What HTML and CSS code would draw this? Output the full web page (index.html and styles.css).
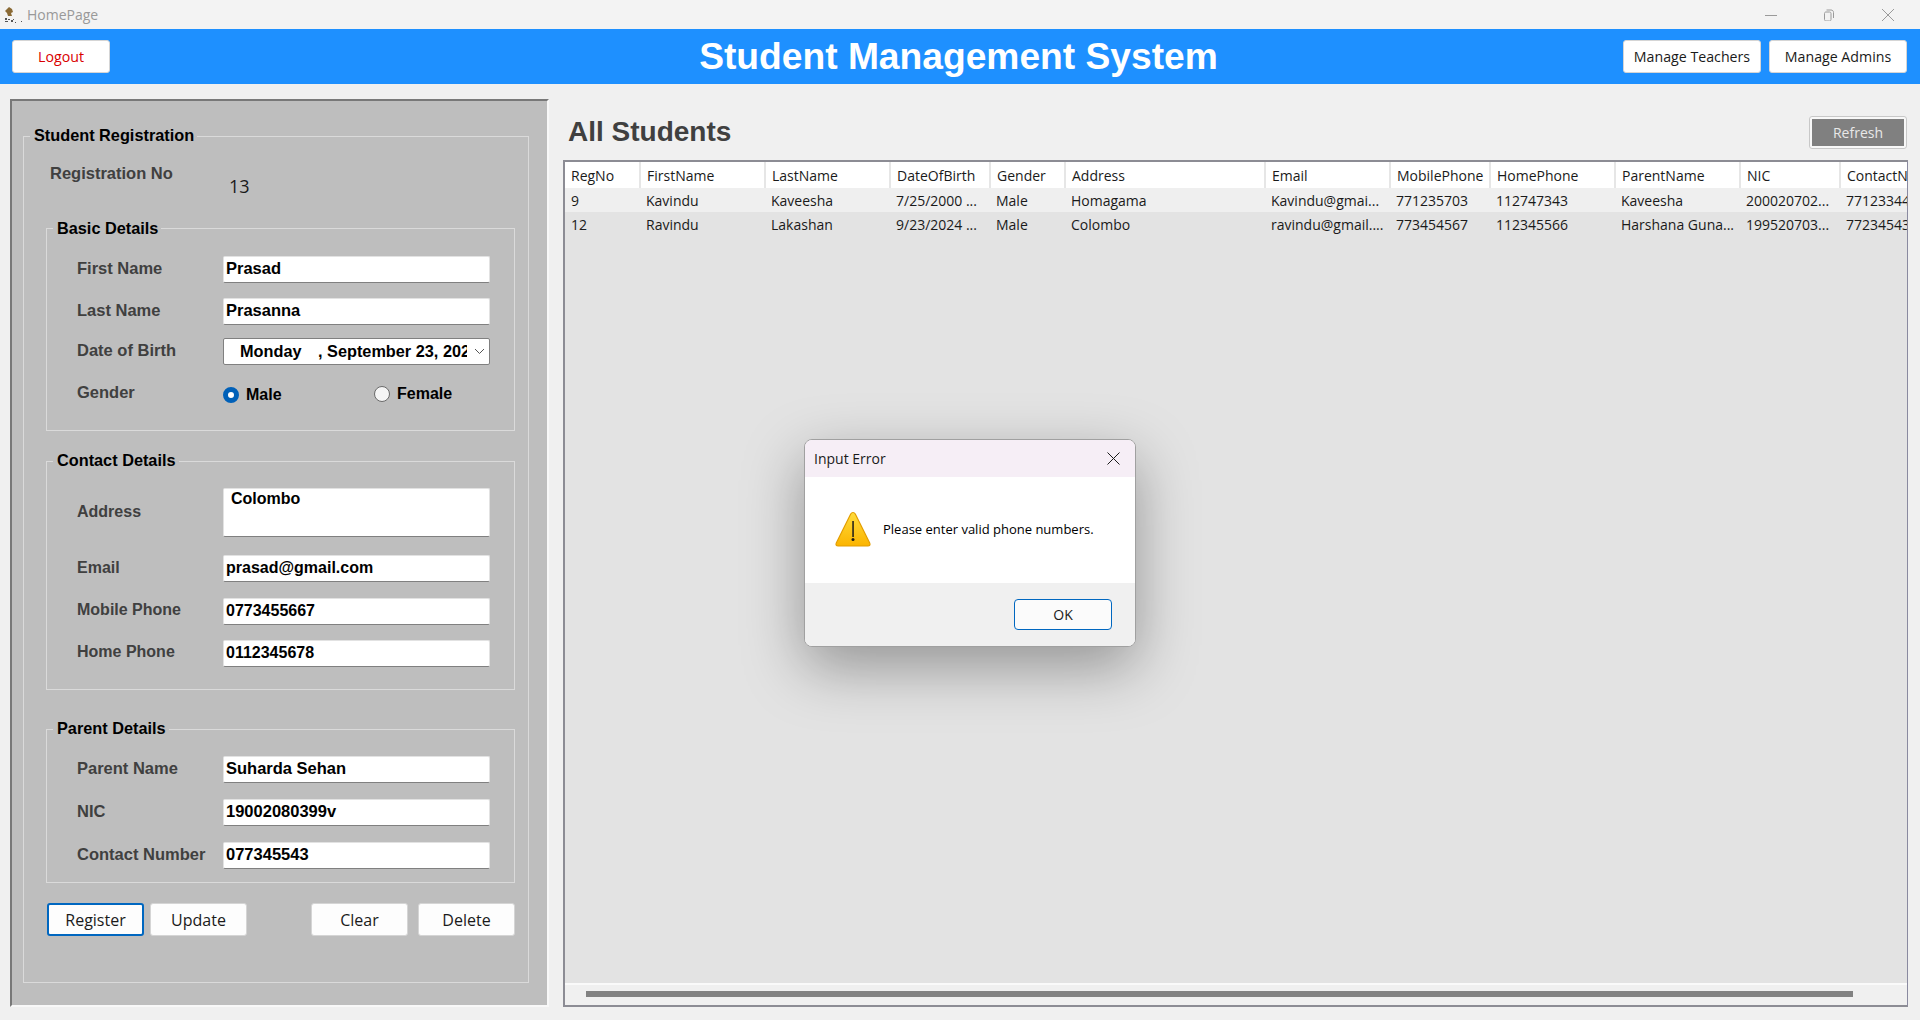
FILE: index.html
```html
<!DOCTYPE html>
<html lang="en">
<head>
    <meta charset="UTF-8">
    <meta name="viewport" content="width=device-width, initial-scale=1.0">
    <title>HomePage</title>
    <link rel="stylesheet" href="styles.css">
</head>
<body>
<div class="titlebar">
    <svg class="app-icon" width="20" height="20" viewBox="0 0 20 20">
        <path d="M7 2l3 2 1 3-2 1 1 3H6L5 8 3 6z" fill="#8a6a35"/>
        <path d="M3 13h2v2H3zM6 14h2v1H6zM3 16h3v1H3zM9 15h2v2H9zM11 14h1v1h-1zM19 16h1v1h-1zM13 17h1v1h-1z" fill="#555"/>
    </svg>
    <span class="app-name">HomePage</span>
    <div class="window-controls">
        <svg width="12" height="12" viewBox="0 0 12 12"><path d="M0 6.5h12" stroke="#9a9a9a" fill="none"/></svg>
        <svg width="12" height="12" viewBox="0 0 12 12"><path d="M1.500 4.500C1.500 3.600 2.100 3 3 3h3.500C7.400 3 8 3.600 8 4.500v6c0 .9-.6 1.500-1.500 1.500H3c-.9 0-1.500-.6-1.500-1.500zM3.500 1H8c1.500 0 2.500 1 2.500 2.500V9" stroke="#9a9a9a" fill="none"/></svg>
        <svg width="14" height="14" viewBox="0 0 14 14"><path d="M1 1l12 12M13 1L1 13" stroke="#9a9a9a" fill="none"/></svg>
    </div>
</div>

<header class="topbar">
    <div class="topbar-left"><button class="top-btn logout">Logout</button></div>
    <h1 class="app-title">Student Management System</h1>
    <div class="topbar-right">
        <button class="top-btn">Manage Teachers</button>
        <button class="top-btn">Manage Admins</button>
    </div>
</header>

<main class="content">
    <section class="form-panel">
        <fieldset class="group outer">
            <legend>Student Registration</legend>
            <div class="reg-row">
                <span class="field-label">Registration No</span>
                <span class="reg-value">13</span>
            </div>

            <fieldset class="group basic">
                <legend>Basic Details</legend>
                <div class="row">
                    <label class="field-label" for="first">First Name</label>
                    <input class="field" id="first" type="text" value="Prasad">
                </div>
                <div class="row tight">
                    <label class="field-label" for="last">Last Name</label>
                    <input class="field" id="last" type="text" value="Prasanna">
                </div>
                <div class="row">
                    <span class="field-label">Date of Birth</span>
                    <div class="date-box">
                        <span class="date-day">Monday</span>
                        <span class="date-rest">, September 23, 2024</span>
                        <svg class="chevron" width="11" height="7" viewBox="0 0 11 7"><path d="M1 1l4.500 4.500L10 1" stroke="#555" fill="none"/></svg>
                    </div>
                </div>
                <div class="row radios">
                    <span class="field-label">Gender</span>
                    <span class="radio-item male"><span class="radio on"></span>Male</span>
                    <span class="radio-item"><span class="radio"></span>Female</span>
                </div>
            </fieldset>

            <fieldset class="group contact">
                <legend>Contact Details</legend>
                <div class="row address-row">
                    <label class="field-label" for="address">Address</label>
                    <textarea class="field address" id="address">Colombo</textarea>
                </div>
                <div class="row wide">
                    <label class="field-label" for="email">Email</label>
                    <input class="field" id="email" type="text" value="prasad@gmail.com">
                </div>
                <div class="row">
                    <label class="field-label" for="mobile">Mobile Phone</label>
                    <input class="field" id="mobile" type="text" value="0773455667">
                </div>
                <div class="row last">
                    <label class="field-label" for="home">Home Phone</label>
                    <input class="field" id="home" type="text" value="0112345678">
                </div>
            </fieldset>

            <fieldset class="group parent">
                <legend>Parent Details</legend>
                <div class="row wide">
                    <label class="field-label" for="parent">Parent Name</label>
                    <input class="field" id="parent" type="text" value="Suharda Sehan">
                </div>
                <div class="row wide">
                    <label class="field-label" for="nic">NIC</label>
                    <input class="field" id="nic" type="text" value="19002080399v">
                </div>
                <div class="row last">
                    <label class="field-label" for="contact">Contact Number</label>
                    <input class="field" id="contact" type="text" value="077345543">
                </div>
            </fieldset>

            <div class="actions">
                <button class="action-btn focused">Register</button>
                <button class="action-btn">Update</button>
                <button class="action-btn push">Clear</button>
                <button class="action-btn">Delete</button>
            </div>
        </fieldset>
    </section>

    <section class="list-panel">
        <div class="list-head">
            <h2>All Students</h2>
            <button class="refresh"><span>Refresh</span></button>
        </div>
        <div class="grid-box">
            <div class="grid-scroll">
                <table class="grid">
                    <colgroup>
                        <col class="w75"><col class="w125"><col class="w125"><col class="w100"><col class="w75"><col class="w200">
                        <col class="w125"><col class="w100"><col class="w125"><col class="w125"><col class="w100"><col class="w125">
                    </colgroup>
                    <thead>
                        <tr>
                            <th>RegNo</th><th>FirstName</th><th>LastName</th><th>DateOfBirth</th><th>Gender</th><th>Address</th>
                            <th>Email</th><th>MobilePhone</th><th>HomePhone</th><th>ParentName</th><th>NIC</th><th>ContactNumber</th>
                        </tr>
                    </thead>
                    <tbody>
                        <tr class="alt">
                            <td>9</td><td>Kavindu</td><td>Kaveesha</td><td>7/25/2000 ...</td><td>Male</td><td>Homagama</td>
                            <td>Kavindu@gmai...</td><td>771235703</td><td>112747343</td><td>Kaveesha</td><td>200020702...</td><td>771233445</td>
                        </tr>
                        <tr>
                            <td>12</td><td>Ravindu</td><td>Lakashan</td><td>9/23/2024 ...</td><td>Male</td><td>Colombo</td>
                            <td>ravindu@gmail....</td><td>773454567</td><td>112345566</td><td>Harshana Guna...</td><td>199520703...</td><td>772345432</td>
                        </tr>
                    </tbody>
                </table>
            </div>
            <div class="hscroll"><div class="hscroll-thumb"></div></div>
        </div>
    </section>
</main>

<!-- message box sits over the page -->
<div class="dialog">
    <div class="dialog-title">
        <span>Input Error</span>
        <svg width="13" height="13" viewBox="0 0 13 13"><path d="M.5.5l12 12M12.500.5l-12 12" stroke="#1a1a1a" fill="none"/></svg>
    </div>
    <div class="dialog-body">
        <svg class="warn" width="36" height="36" viewBox="0 0 36 36">
            <defs>
                <linearGradient id="warnFill" x1="0" y1="0" x2="0" y2="1">
                    <stop offset="0" stop-color="#ffdc3c"/>
                    <stop offset="1" stop-color="#fbb400"/>
                </linearGradient>
            </defs>
            <path d="M18 1.500c1 0 1.700.5 2.300 1.500l14.400 29c.8 1.700 0 3-1.800 3H3.100c-1.800 0-2.600-1.300-1.800-3L15.700 3c.6-1 1.300-1.500 2.300-1.500z" fill="url(#warnFill)" stroke="#e39d00" stroke-width="1.200"/>
            <rect x="17.300" y="10" width="1.500" height="16" fill="#1a1a1a"/>
            <circle cx="18" cy="28.500" r="1.500" fill="#1a1a1a"/>
        </svg>
        <span class="dialog-msg">Please enter valid phone numbers.</span>
    </div>
    <div class="dialog-foot">
        <button class="dialog-ok">OK</button>
    </div>
</div>
</body>
</html>
```

FILE: styles.css
```css
* {
    box-sizing: border-box;
}
body {
    margin: 0;
    height: 1020px;
    overflow: hidden;
    background-color: #f0f0f0;
    font-family: "Open Sans", "Noto Sans", sans-serif;
    display: flex;
    flex-direction: column;
}

/* window title */
.titlebar {
    height: 29px;
    background-color: #f3f3f3;
    display: flex;
    align-items: center;
}
.app-icon {
    margin-left: 2px;
    margin-top: 1px;
}
.app-name {
    margin-left: 5px;
    font-size: 14px;
    color: #999;
}
.window-controls {
    margin-left: auto;
    margin-right: 25px;
    display: flex;
    align-items: center;
    gap: 46px;
}

/* blue bar */
.topbar {
    height: 55px;
    background-color: #1e90ff;
    padding: 0 13px 0 12px;
    display: grid;
    grid-template-columns: 1fr auto 1fr;
    align-items: center;
}
.app-title {
    margin: 0 2px 0 0;
    color: #fff;
    font-family: "Liberation Sans", Arial, sans-serif;
    font-size: 37.200px;
    font-weight: bold;
}
.topbar-right {
    display: flex;
    justify-content: flex-end;
    gap: 8px;
}
.top-btn {
    height: 33px;
    width: 138px;
    background-color: #fff;
    border: 1px solid #d5d5d5;
    border-radius: 3px;
    font-family: inherit;
    font-size: 14.200px;
    color: #1a1a1a;
    padding: 0;
}
.logout {
    width: 98px;
    color: #d90000;
}

.content {
    flex: 1;
    display: flex;
    padding: 15px 12px 13px 10px;
}

/* left form */
.form-panel {
    width: 539px;
    background-color: #bebebe;
    border-style: solid;
    border-width: 2px;
    border-color: #787878 #f8f8f8 #f8f8f8 #787878;
    padding: 25px 0 0 11px;
}
.group {
    margin: 0;
    padding: 0;
    border: 1px solid #dadada;
    min-width: 0;
    font-family: "Liberation Sans", Arial, sans-serif;
}
.group > legend {
    margin-left: -24px;
    padding: 0 3px 0 4px;
    height: 20px;
    line-height: 18px;
    font-size: 16.300px;
    font-weight: bold;
    color: #000;
}
.group.basic > legend {
    line-height: 20px;
}
.outer {
    width: 506px;
    height: 857px;
    padding: 0 13px 0 22px;
}
.outer > legend {
    margin-left: -16px;
}
.reg-row {
    height: 72px;
    display: flex;
    align-items: flex-start;
    padding: 18px 0 0 4px;
}
.reg-row .field-label {
    width: 179px;
}
.reg-value {
    font-family: "Open Sans", sans-serif;
    font-size: 18px;
    line-height: 24px;
    color: #1a1a1a;
    margin-top: 10px;
}
.field-label {
    display: block;
    width: 146px;
    flex: none;
    margin-bottom: 2px;
    font-size: 16.500px;
    font-weight: bold;
    color: #404040;
}
.basic {
    padding: 18px 0 0 30px;
    height: 213px;
}
.contact {
    margin-top: 20px;
    padding: 17px 0 0 30px;
    height: 239px;
}
.contact .field-label {
    margin-bottom: 3px;
    font-size: 16px;
}
.contact .address-row .field-label,
.contact .wide .field-label {
    margin-bottom: 1px;
}
.contact .field {
    font-size: 16px;
}
.parent {
    margin-top: 29px;
    padding: 17px 0 0 30px;
    height: 164px;
}
.row {
    display: flex;
    align-items: center;
    height: 27px;
    margin-bottom: 15px;
}
.row.tight {
    margin-bottom: 13px;
}
.row.wide {
    margin-bottom: 16px;
}
.row.last {
    margin-bottom: 0;
}
.row.address-row {
    height: 49px;
    margin-bottom: 18px;
}
.field {
    width: 267px;
    height: 27px;
    background-color: #fff;
    border: 1px solid #e2e2e2;
    border-bottom: 1px solid #808080;
    border-radius: 2px;
    padding: 0 0 2px 2px;
    font-family: "Liberation Sans", Arial, sans-serif;
    font-size: 16.500px;
    font-weight: bold;
    color: #000;
    outline: none;
}
.address {
    height: 49px;
    padding: 1px 0 0 7px;
    resize: none;
    overflow: hidden;
}
.date-box {
    position: relative;
    width: 267px;
    height: 27px;
    background-color: #fff;
    border: 1px solid #808080;
    border-radius: 2px;
    display: flex;
    align-items: center;
    padding: 0 22px 0 16px;
    overflow: hidden;
    white-space: nowrap;
    font-size: 16.300px;
    font-weight: bold;
    color: #000;
}
.date-day {
    width: 78px;
    flex: none;
}
.date-rest {
    overflow: hidden;
}
.chevron {
    position: absolute;
    right: 4px;
    top: 9px;
}
.radios {
    margin: 13px 0 0;
}
.radio-item {
    display: flex;
    align-items: center;
    font-size: 16px;
    font-weight: bold;
    color: #000;
}
.radio-item.male {
    width: 151px;
    margin-top: 2px;
}
.radio {
    width: 16px;
    height: 16px;
    margin-right: 7px;
    border-radius: 50%;
    border: 1px solid #6a6a6a;
    background-color: #f5f5f5;
}
.radio.on {
    background-color: #fff;
    border: 5px solid #0060b8;
}
.actions {
    display: flex;
    margin-top: 20px;
    width: 468px;
    margin-left: 1px;
}
.action-btn {
    width: 97px;
    height: 33px;
    margin-right: 6px;
    background-color: #fdfdfd;
    border: 1px solid #d5d5d5;
    border-radius: 3px;
    font-family: "Open Sans", sans-serif;
    font-size: 16px;
    color: #1a1a1a;
    padding: 0;
}
.action-btn:last-child {
    margin-right: 0;
}
.action-btn.focused {
    border: 2px solid #0067c0;
}
.action-btn.push {
    margin-left: auto;
    margin-right: 10px;
}

/* right list */
.list-panel {
    width: 1345px;
    margin-left: 14px;
    display: flex;
    flex-direction: column;
}
.list-head {
    height: 61px;
    display: flex;
    justify-content: space-between;
    align-items: flex-start;
    padding: 17px 1px 0 5px;
}
.list-head h2 {
    margin: 0;
    font-family: "Liberation Sans", Arial, sans-serif;
    font-size: 28px;
    line-height: 32px;
    font-weight: bold;
    color: #404040;
}
.refresh {
    width: 98px;
    height: 33px;
    padding: 2px;
    background-color: #f8f8f8;
    border: 1px solid #c8c8c8;
    border-radius: 3px;
}
.refresh span {
    display: block;
    height: 100%;
    background-color: #808080;
    color: #e8e8e8;
    font-family: "Open Sans", sans-serif;
    font-size: 14px;
    line-height: 28px;
}
.grid-box {
    flex: 1;
    background-color: #e3e3e3;
    border-style: solid;
    border-width: 2px 1px 2px 2px;
    border-color: #8c8c94 #8a8aa0 #8c8c94 #8c8c94;
    display: flex;
    flex-direction: column;
}
.grid-scroll {
    flex: 1;
    overflow: hidden;
}
.grid {
    border-collapse: collapse;
    table-layout: fixed;
    width: 1400px;
    font-size: 14px;
    color: #1a1a1a;
}
.w75 { width: 75px; }
.w100 { width: 100px; }
.w125 { width: 125px; }
.w200 { width: 200px; }
.grid th {
    height: 26px;
    padding: 0 0 0 6px;
    background-color: #fff;
    border-right: 2px solid #e6e6e6;
    font-weight: normal;
    text-align: left;
    white-space: nowrap;
    overflow: hidden;
}
.grid td {
    height: 24px;
    padding: 0 0 0 6px;
    white-space: nowrap;
    overflow: hidden;
}
.grid .alt {
    background-color: #efefef;
}
.hscroll {
    height: 22px;
    background-color: #f0f0f0;
    border-top: 2px solid #fafafa;
    padding: 6px 0 0 21px;
}
.hscroll-thumb {
    width: 1267px;
    height: 6px;
    background-color: #828282;
}

/* message box */
.dialog {
    position: absolute;
    left: 804px;
    top: 439px;
    width: 332px;
    height: 208px;
    border: 1px solid #a0a0a0;
    border-radius: 8px;
    overflow: hidden;
    background-color: #fff;
    box-shadow: 0 20px 60px rgba(0, 0, 0, 0.35);
    display: flex;
    flex-direction: column;
}
.dialog-title {
    height: 37px;
    background-color: #f6eef6;
    display: flex;
    align-items: center;
    justify-content: space-between;
    padding: 0 15px 0 9px;
    font-size: 14px;
    color: #1a1a1a;
}
.dialog-body {
    height: 106px;
    display: flex;
    align-items: center;
    padding: 0 0 0 30px;
}
.warn {
    margin-top: -2px;
}
.dialog-msg {
    margin-left: 12px;
    margin-top: -2px;
    font-size: 13px;
    color: #000;
}
.dialog-foot {
    flex: 1;
    background-color: #f0f0f0;
    padding: 16px 0 0 209px;
}
.dialog-ok {
    width: 98px;
    height: 31px;
    background-color: #fbfbfb;
    border: 1px solid #0067c0;
    border-radius: 4px;
    font-family: inherit;
    font-size: 14px;
    color: #1a1a1a;
    padding: 0;
}
```
